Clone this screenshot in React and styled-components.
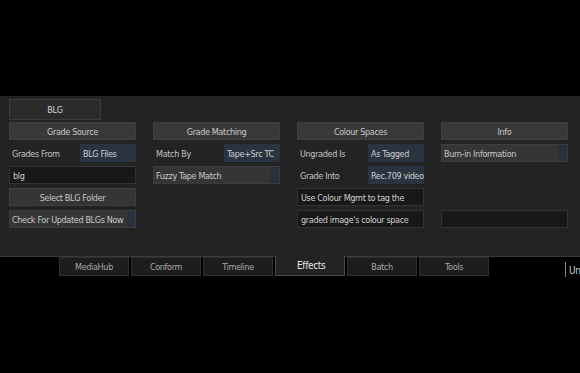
import React from "react";
import styled, { createGlobalStyle } from "styled-components";

const Global = createGlobalStyle`
  html, body { margin: 0; padding: 0; background: #000; }
  body { font-family: "DejaVu Sans Condensed", "DejaVu Sans", sans-serif; font-stretch: condensed; font-size: 9px; letter-spacing: -0.35px; color: #c4c4c4; overflow: hidden; }
`;

const Page = styled.div`
  width: 580px;
  height: 373px;
  display: flex;
  flex-direction: column;
  background: #000;
`;

const TopSpace = styled.div`
  height: 96px;
  flex: none;
`;

const Panel = styled.div`
  height: 157px;
  flex: none;
  background: #232323;
  border-bottom: 1px solid #3a3a3a;
  padding: 3px 9px 0 9px;
  box-sizing: content-box;
  display: flex;
  flex-direction: column;
  gap: 3px;
`;

const PageTab = styled.div`
  width: 90px;
  height: 18px;
  border: 1px solid #3c3c3c;
  background: #2b2b2b;
  display: flex;
  align-items: center;
  justify-content: center;
  padding-top: 1px;
  box-sizing: content-box;
  margin-bottom: -1px;
  color: #d6d6d6;
`;

const Columns = styled.div`
  display: grid;
  grid-template-columns: repeat(4, 127px);
  column-gap: 17px;
`;

const Column = styled.div`
  display: grid;
  grid-template-columns: minmax(0, 1fr);
  grid-template-rows: repeat(5, 18px);
  row-gap: 4px;
  min-width: 0;
`;

const Header = styled.div`
  background: #393939;
  border: 1px solid #404040;
  box-sizing: border-box;
  display: flex;
  align-items: center;
  justify-content: center;
  padding-top: 1px;
  color: #c8c8c8;
  min-width: 0;
`;

const Button = styled(Header)`
  background: #353535;
`;

const LabelRow = styled.div`
  display: flex;
  align-items: stretch;
  min-width: 0;
`;

const Label = styled.div`
  flex: 1;
  display: flex;
  align-items: center;
  padding: 1px 0 0 3px;
  color: #c2c2c2;
`;

const Value = styled.div`
  width: 56px;
  flex: none;
  background: #2a3340;
  display: flex;
  align-items: center;
  padding: 1px 0 0 3px;
  box-sizing: border-box;
  white-space: nowrap;
  overflow: hidden;
  color: #cfcfcf;
`;

const Toggle = styled.div`
  display: flex;
  background: #353535;
  border: 1px solid #3c3c3c;
  box-sizing: border-box;
  min-width: 0;
`;

const ToggleText = styled.div`
  flex: 1;
  min-width: 0;
  display: flex;
  align-items: center;
  padding: 1px 0 0 2px;
  white-space: nowrap;
  overflow: hidden;
  color: #c8c8c8;
`;

const ToggleLed = styled.div`
  width: 8px;
  flex: none;
  background: #27313d;
`;

const Field = styled.div`
  background: #181818;
  border: 1px solid #323232;
  box-sizing: border-box;
  display: flex;
  align-items: center;
  padding: 1px 0 0 3px;
  white-space: nowrap;
  overflow: hidden;
  color: #cfcfcf;
  min-width: 0;
`;

const Empty = styled.div``;

const TabBar = styled.div`
  height: 20px;
  flex: none;
  display: flex;
  align-items: stretch;
  padding-left: 59px;
  gap: 2px;
`;

const Tab = styled.div`
  width: 70px;
  flex: none;
  box-sizing: border-box;
  display: flex;
  align-items: center;
  margin-top: ${(p) => (p.$active ? "-1px" : "0")};
  height: ${(p) => (p.$active ? "20px" : "19px")};
  background: ${(p) => (p.$active ? "#232323" : "#1d1d1d")};
  border: 1px solid ${(p) => (p.$active ? "#4a4a4a" : "#2f2f2f")};
  border-top: ${(p) => (p.$active ? "none" : "1px solid #2f2f2f")};
  color: ${(p) => (p.$active ? "#e8e8e8" : "#a8a8a8")};
  font-size: ${(p) => (p.$active ? "10px" : "9px")};
  justify-content: ${(p) => (p.$active ? "flex-start" : "center")};
  padding-left: ${(p) => (p.$active ? "21px" : "0")};
`;

const StatusArea = styled.div`
  margin-left: auto;
  display: flex;
  align-items: center;
  gap: 3px;
  padding-top: 6px;
  width: 15px;
  overflow: hidden;
`;

const Divider = styled.div`
  width: 1px;
  height: 16px;
  background: #8a8a8a;
  flex: none;
`;

const StatusText = styled.div`
  color: #d0d0d0;
  font-size: 10px;
  white-space: nowrap;
`;

export default function App() {
  return (
    <Page>
      <Global />
      <TopSpace />
      <Panel>
        <PageTab>BLG</PageTab>
        <Columns>
          <Column>
            <Header>Grade Source</Header>
            <LabelRow>
              <Label>Grades From</Label>
              <Value>BLG Files</Value>
            </LabelRow>
            <Field>blg</Field>
            <Button>Select BLG Folder</Button>
            <Toggle>
              <ToggleText>Check For Updated BLGs Now</ToggleText>
              <ToggleLed />
            </Toggle>
          </Column>
          <Column>
            <Header>Grade Matching</Header>
            <LabelRow>
              <Label>Match By</Label>
              <Value>Tape+Src TC</Value>
            </LabelRow>
            <Toggle>
              <ToggleText>Fuzzy Tape Match</ToggleText>
              <ToggleLed />
            </Toggle>
          </Column>
          <Column>
            <Header>Colour Spaces</Header>
            <LabelRow>
              <Label>Ungraded Is</Label>
              <Value>As Tagged</Value>
            </LabelRow>
            <LabelRow>
              <Label>Grade Into</Label>
              <Value>Rec.709 video</Value>
            </LabelRow>
            <Field>Use Colour Mgmt to tag the</Field>
            <Field>graded image's colour space</Field>
          </Column>
          <Column>
            <Header>Info</Header>
            <Toggle>
              <ToggleText>Burn-in Information</ToggleText>
              <ToggleLed />
            </Toggle>
            <Empty />
            <Empty />
            <Field />
          </Column>
        </Columns>
      </Panel>
      <TabBar>
        <Tab>MediaHub</Tab>
        <Tab>Conform</Tab>
        <Tab>Timeline</Tab>
        <Tab $active>Effects</Tab>
        <Tab>Batch</Tab>
        <Tab>Tools</Tab>
        <StatusArea>
          <Divider />
          <StatusText>Unsaved</StatusText>
        </StatusArea>
      </TabBar>
    </Page>
  );
}
